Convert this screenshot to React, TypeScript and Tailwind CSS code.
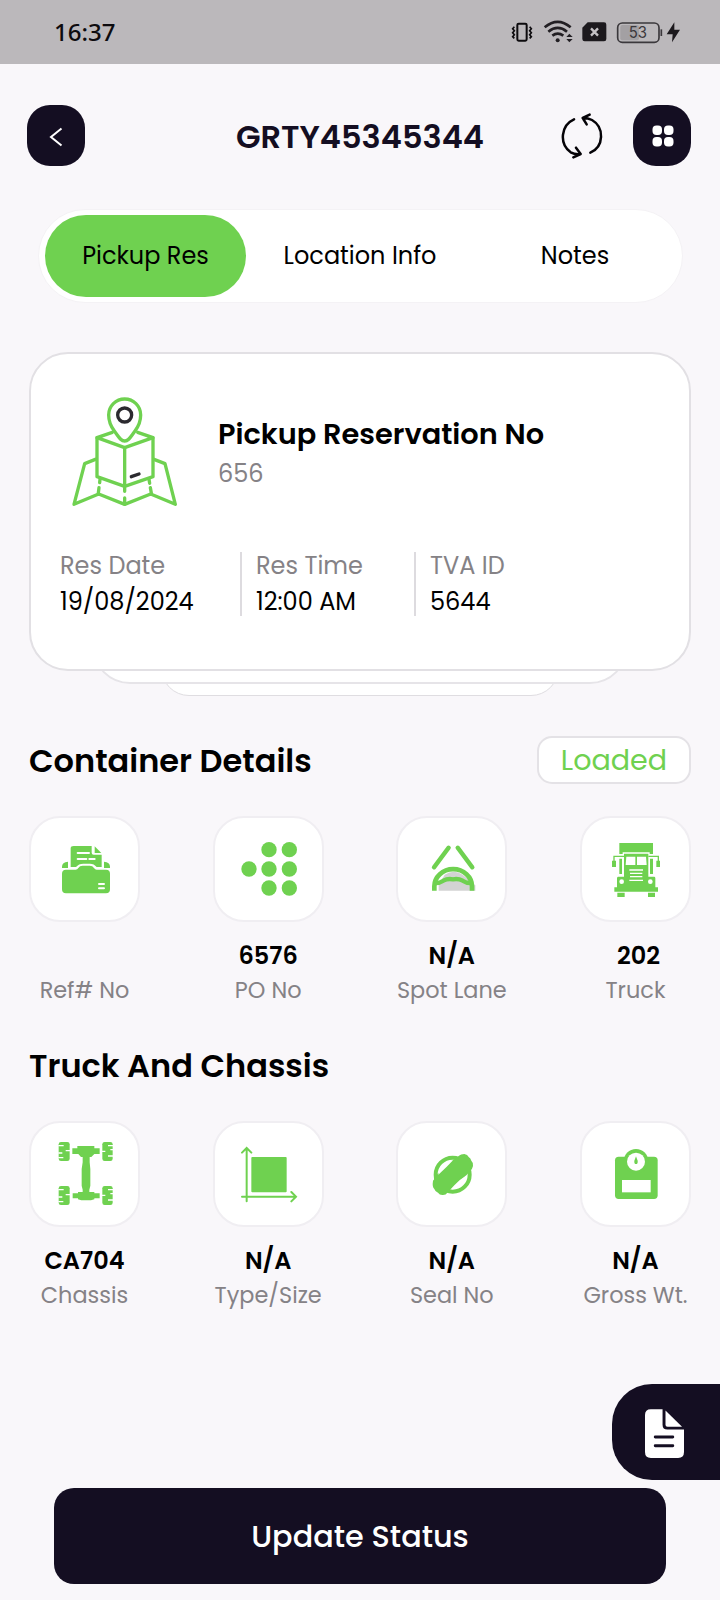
import React from "react";

interface DetailType {
  value: string;
  valueClass?: string;
  label: string;
  icon: React.ReactNode;
}

interface SectionProps {
  title: string;
  badge?: string;
  items: DetailType[];
}

const GREEN = "#6fd150";
const NAVY = "#140e22";

const StatusIcons = () => (
  <svg width="180" height="30" viewBox="50 50 540 90" fill="none">
    <rect x="81" y="70" width="28" height="51" rx="4" stroke="#0d0b0e" strokeWidth="6" />
    <path
      d="M72 79l-5 6 5 6-5 6 5 6-5 6 5 5M118 79l5 6-5 6 5 6-5 6 5 6-5 5"
      stroke="#0d0b0e"
      strokeWidth="5"
    />
    <path
      d="M163 81Q202 48 241 81M174 94Q202 71 230 94M186 106Q202 94 219 106"
      stroke="#221f23"
      strokeWidth="8"
    />
    <circle cx="202" cy="120" r="6" fill="#221f23" />
    <path d="M228 110l9-10 10 10zM228 116l9 10 10-10z" fill="#221f23" />
    <path
      d="M292 66h49a7 7 0 0 1 7 7v43a7 7 0 0 1-7 7h-58a7 7 0 0 1-7-7V82z"
      fill="#1c191d"
    />
    <path d="M302 84l21 22M323 84l-21 22" stroke="#c4c1c4" strokeWidth="7" />
    <rect x="390" y="74" width="56" height="46" rx="6" fill="#a3a0a3" />
    <rect x="382" y="68" width="124" height="58" rx="14" stroke="#3b383c" strokeWidth="5" />
    <path d="M513 87v20" stroke="#3b383c" strokeWidth="5" />
    <text
      x="415"
      y="113"
      fill="#3b383c"
      fontFamily="Inter, sans-serif"
      fontSize="46"
      textLength="55"
      lengthAdjust="spacingAndGlyphs"
    >
      53
    </text>
    <path d="M552 66l-23 36h18l-2 24 24-38h-17z" fill="#1c191d" />
  </svg>
);

const RefreshIcon = () => (
  <svg
    width="44"
    height="50"
    viewBox="214 334 132 150"
    fill="none"
    stroke="#050307"
    strokeWidth="7.500"
    strokeLinecap="round"
    strokeLinejoin="round"
  >
    <path d="M253 359C213 377 208 433 243 458Q256 465 273 463M259 444l14 19-22 10" />
    <path d="M302 459C343 441 345 383 307 361Q296 355 279 355M300 345l-21 10 12 19" />
  </svg>
);

const MapBoxIcon = () => (
  <svg
    width="110"
    height="114"
    viewBox="210 165 330 342"
    fill="none"
    stroke={GREEN}
    strokeWidth="10"
    strokeLinecap="round"
    strokeLinejoin="round"
  >
    <path d="M374 303C362 303 356 290 343 273C331 257 326 242 326 225a48 48 0 0 1 96 0C422 242 417 257 405 273C392 290 386 303 374 303z" />
    <path d="M337 277l-46 16 83 30 85-30-46-16" />
    <path d="M291 293v117l83 29 85-29V293M374 323v116" />
    <path d="M286 358l-32 13-32 122 74-31 78 31 78-31 74 31-31-122-33-13" />
    <path d="M300 418l-1 10M297 443l-2 16M374 443v11M374 474v18M447 418l2 12M451 443l3 16" />
    <circle cx="374" cy="225" r="21" stroke="#2b2a2f" />
    <path d="M394 410l23-8" stroke="#2b2a2f" />
  </svg>
);

const FolderIcon = () => (
  <svg className="h-full w-full" viewBox="87 290 333 315" fill={GREEN}>
    <path d="M221 380h54v20q0 6 6 6h24v37h-15q-8-10-20-10h-20q-14 0-22 10h-16v-56q0-7 9-7z" />
    <path d="M284 381l20 20h-20z" />
    <path d="M204 427v19h-18v-4q0-13 18-15zM312 427v19h18v-4q0-13-18-15z" />
    <path d="M198 451h29q5 0 8-5 4-7 13-7h21q9 0 13 7 3 5 8 5h28q12 0 12 12v47q0 12-12 12H198q-12 0-12-12v-47q0-12 12-12z" />
    <path
      d="M233 401h34M233 419h26M268 419h16M297 494h15M297 507h15"
      stroke="#fff"
      strokeWidth="6"
      strokeLinecap="round"
    />
  </svg>
);

const DotsIcon = () => (
  <svg className="h-full w-full" viewBox="638 290 333 315" fill={GREEN}>
    <circle cx="746" cy="449" r="23" />
    <circle cx="806" cy="391" r="23" />
    <circle cx="806" cy="449" r="23" />
    <circle cx="806" cy="506" r="23" />
    <circle cx="867" cy="391" r="23" />
    <circle cx="867" cy="449" r="23" />
    <circle cx="867" cy="506" r="23" />
  </svg>
);

const SpotLaneIcon = () => (
  <svg className="h-full w-full" viewBox="108 290 333 315" fill="none">
    <path d="M236 514V498l18-32q28-18 54 0l38 32v16z" fill="#d3d3d3" />
    <path
      d="M222 444l44-59M293 385l44 59"
      stroke={GREEN}
      strokeWidth="13"
      strokeLinecap="round"
    />
    <path d="M223 514v-13a56 51 0 0 1 113 0v13" stroke={GREEN} strokeWidth="14" />
    <path d="M226 491q14 0 24-7 13-7 29-4 16-3 29 4 10 7 24 7" stroke={GREEN} strokeWidth="13" />
  </svg>
);

const TruckIcon = () => (
  <svg className="h-full w-full" viewBox="660 288 333 315" fill={GREEN}>
    <path d="M778 369h101v33h-10v-5h-81v5h-10z" />
    <path d="M792 401h73v69h18q3 0 3 5v27h8v13H763v-13h8v-27q0-5 3-5h18z" />
    <path d="M778 416h8v46h-8zM870 416h9v46h-9zM756 422h12v19h-12zM889 422h11v19h-11zM772 518h22v13h-22zM864 518h21v13h-21z" />
    <path d="M762 424v-15h30M865 409h30v15" fill="none" stroke={GREEN} strokeWidth="4" />
    <path d="M799 410h27v25h-29zM831 410h27l2 25h-29z" fill="#fff" />
    <path d="M808 450h41M810 460h37M810 470h37M808 481h41" stroke="#fff" strokeWidth="4" />
    <circle cx="785" cy="485" r="7" fill="#fff" />
    <circle cx="871" cy="485" r="7" fill="#fff" />
  </svg>
);

const ChassisIcon = () => (
  <svg className="h-full w-full" viewBox="88 273 333 315" fill={GREEN}>
    <path d="M233 348h51v7h16v17h-16l-9 9h-5v16l2 20v50l-3 12v7h15v4h16v15h-16v3l-10 3h-29l-10-3v-3h-16v-15h16v-4h14v-7l-3-12v-50l3-20v-16h-5l-8-9h-18v-17h15z" />
    {/* wheels with tread gaps */}
    <rect x="177" y="336" width="33" height="57" rx="7" />
    <rect x="177" y="468" width="33" height="57" rx="7" />
    <rect x="308" y="336" width="31" height="57" rx="7" />
    <rect x="308" y="468" width="31" height="57" rx="7" />
    <path
      d="M176 347h16M198 362h13M176 369h12M176 383h15M176 479h16M198 494h13M176 501h12M176 515h15"
      stroke="#fff"
      strokeWidth="4"
    />
    <path
      d="M340 347h-15M307 364h10M340 359h-8M340 378h-15M340 479h-15M307 496h10M340 491h-8M340 510h-15"
      stroke="#fff"
      strokeWidth="4"
    />
  </svg>
);

const SizeIcon = () => (
  <svg className="h-full w-full" viewBox="640 273 333 315" fill="none">
    <rect x="755" y="381" width="106" height="106" rx="3" fill={GREEN} />
    <path
      d="M741 514V354M727 368l14-14 14 14M727 500h161M875 486l14 14-14 14"
      stroke={GREEN}
      strokeWidth="6"
      strokeLinecap="round"
    />
  </svg>
);

const SealIcon = () => (
  <svg className="h-full w-full" viewBox="109 273 333 315" fill="none">
    <circle cx="279" cy="434" r="51" stroke={GREEN} strokeWidth="12" />
    <path
      d="M220 452Q228 446 230 436L276 392Q290 386 298 377Q303 372 314 372Q324 373 327 381Q333 384 335 392Q341 397 340 408Q338 418 331 424L318 438Q300 448 284 466L263 488Q259 495 250 495Q240 496 235 488Q227 486 224 477Q217 471 220 452z"
      fill={GREEN}
    />
    <path d="M236 434Q238 402 280 391Q262 411 236 434zM279 477Q296 455 320 436Q320 470 279 477z" fill="#fff" />
  </svg>
);

const ScaleIcon = () => (
  <svg className="h-full w-full" viewBox="660 273 333 315" fill={GREEN}>
    <rect x="765" y="380" width="128" height="127" rx="11" />
    <circle cx="828" cy="394" r="37" />
    <circle cx="828" cy="395" r="27" fill="#fff" />
    <rect x="786" y="450" width="86" height="37" fill="#fff" />
    <path d="M828 379l5 13q1 10-5 10t-5-10z" />
  </svg>
);

const containerDetails: DetailType[] = [
  { value: "", label: "Ref# No", icon: <FolderIcon /> },
  { value: "6576", label: "PO No", icon: <DotsIcon /> },
  { value: "N/A", label: "Spot Lane", icon: <SpotLaneIcon /> },
  { value: "202", valueClass: "pl-1.5", label: "Truck", icon: <TruckIcon /> },
];

const truckDetails: DetailType[] = [
  { value: "CA704", label: "Chassis", icon: <ChassisIcon /> },
  { value: "N/A", label: "Type/Size", icon: <SizeIcon /> },
  { value: "N/A", label: "Seal No", icon: <SealIcon /> },
  { value: "N/A", label: "Gross Wt.", icon: <ScaleIcon /> },
];

const Section: React.FC<SectionProps> = ({ title, badge, items }) => {
  return (
    <section className="px-[29px]">
      <div className="flex h-12 items-center justify-between">
        <h2 className="pt-0.5 text-[32px] font-semibold text-black">{title}</h2>
        {badge && (
          <span className="flex h-12 w-[154px] items-center justify-center rounded-[15px] border-2 border-[#e4e2e6] bg-white text-[28.6px] text-[#6fd150]">
            {badge}
          </span>
        )}
      </div>
      <div className="mt-8 flex justify-between">
        {items.map((item) => (
          <div key={item.label} className="flex w-[111px] flex-col items-center whitespace-nowrap">
            <div className="h-[106px] w-[111px] rounded-[31px] border-2 border-[#f0eef2] bg-white">
              <div className="-m-0.5 h-[105px] w-[111px]">{item.icon}</div>
            </div>
            <div className={`mt-[19px] h-[30px] text-2xl leading-[30px] font-semibold text-black ${item.valueClass ?? ""}`}>
              {item.value}
            </div>
            <div className="mt-1 text-[22.4px] leading-[30px] text-[#858286]">{item.label}</div>
          </div>
        ))}
      </div>
    </section>
  );
};

const ReservationCard = () => {
  return (
    <div>
      <div className="relative z-20 mx-[29px] h-[319px] rounded-[39px] border-2 border-[#e2e0e4] bg-white">
        <div className="flex pt-[41px] pl-[39px]">
          <MapBoxIcon />
          <div className="pt-[21px] pl-[38px]">
            <h3 className="text-[28.8px] leading-9 font-semibold text-black">Pickup Reservation No</h3>
            <p className="mt-1 text-2xl leading-9 text-[#858286]">656</p>
          </div>
        </div>
        <div className="mt-[43px] flex h-16 pl-[29px] text-2xl leading-9 text-black">
          <div className="-mt-1 w-[180px]">
            <p className="text-[#858286]">Res Date</p>
            <p>19/08/2024</p>
          </div>
          <div className="w-[174px] border-l-2 border-[#dddbdf] pl-3.5">
            <p className="-mt-1 text-[#858286]">Res Time</p>
            <p>12:00 AM</p>
          </div>
          <div className="border-l-2 border-[#dddbdf] pl-3.5">
            <p className="-mt-1 text-[#858286]">TVA ID</p>
            <p>5644</p>
          </div>
        </div>
      </div>
      <div className="relative z-10 mx-[92px] -mt-[88px] h-[101px] rounded-[38px] border-2 border-[#e6e4e8] bg-white" />
      <div className="mx-[161px] -mt-[68px] h-20 rounded-[28px] border border-[#dfdde1] bg-white" />
    </div>
  );
};

const App = () => {
  return (
    <main className="flex h-[1600px] w-[720px] flex-col bg-[#f9f7fa] font-['Poppins','Inter',sans-serif]">
      <div className="flex h-16 items-center justify-between bg-[#bbb8bb] pr-[33px] pl-[54px]">
        <span className="font-['Noto_Sans',sans-serif] text-2xl font-medium text-[#0d0b0e]">16:37</span>
        <StatusIcons />
      </div>

      <header className="mt-[41px] flex h-[61px] items-center pr-[29px] pl-[27px]">
        <button className="flex h-[61px] w-[58px] items-center justify-center rounded-[23px] bg-[#140e22]">
          <svg width="14" height="20" viewBox="0 0 14 20" fill="none" stroke="#fff" strokeWidth="2" className="mt-0.5">
            <path d="M12.500 1.500L2 10l10.500 8.500" />
          </svg>
        </button>
        <h1 className="w-[550px] pt-[3px] text-center text-[32px] font-semibold text-[#140e22]">GRTY45345344</h1>
        <div className="-ml-[74px] flex flex-1 items-center justify-between">
          <RefreshIcon />
          <button className="flex h-[61px] w-[58px] items-center justify-center rounded-[23px] bg-[#140e22]">
            <svg width="22" height="22" viewBox="0 0 22 22" fill="#fff" className="mt-px ml-0.5">
              <rect x="0.500" y="0.500" width="9.500" height="9.500" rx="4" />
              <rect x="12" y="0.500" width="9.500" height="9.500" rx="4" />
              <rect x="0.500" y="12" width="9.500" height="9.500" rx="4" />
              <rect x="12" y="12" width="9.500" height="9.500" rx="4" />
            </svg>
          </button>
        </div>
      </header>

      <nav className="mt-[43px] mr-[37px] ml-[38px] flex h-[94px] items-center rounded-full border border-[#f4f2f5] bg-white px-1.5 text-2xl text-black">
        <button className="h-[82px] w-[201px] rounded-[41px] bg-[#6fd150]">Pickup Res</button>
        <button className="w-[228px]">Location Info</button>
        <button className="w-[202px]">Notes</button>
      </nav>

      <div className="mt-[49px]">
        <ReservationCard />
      </div>

      <div className="mt-10">
        <Section title="Container Details" badge="Loaded" items={containerDetails} />
      </div>
      <div className="mt-9">
        <Section title="Truck And Chassis" items={truckDetails} />
      </div>

      <button className="mt-[74px] flex h-24 w-[108px] shrink-0 items-center self-end rounded-l-[40px] bg-[#140e22] pl-[33px]">
        <svg width="39" height="49" viewBox="0 0 40 50" fill="#fff" className="mt-0.5">
          <path d="M6 0h12v16q0 5 5 5h17v23q0 6-6 6H6q-6 0-6-6V6q0-6 6-6z" />
          <path d="M21 1.500L38 18H23q-2 0-2-2z" />
          <path d="M10.500 28.500h18M10.500 37.500h18" stroke={NAVY} strokeWidth="3" strokeLinecap="round" />
        </svg>
      </button>
      <button className="mt-2 ml-[54px] h-24 w-[612px] shrink-0 rounded-[20px] bg-[#140e22] pt-0.5 text-[30.3px] font-medium text-white">
        Update Status
      </button>
    </main>
  );
};

export default App;
